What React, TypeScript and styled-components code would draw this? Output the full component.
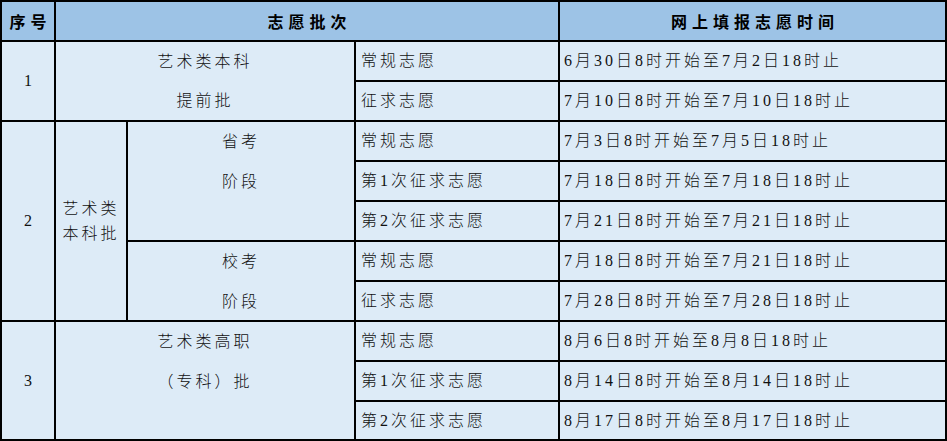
import React from "react";
import styled, { createGlobalStyle } from "styled-components";

const GlobalStyle = createGlobalStyle`
  html, body { margin: 0; padding: 0; background: #ffffff; }
  body { font-family: "Liberation Serif", "Noto Sans CJK SC", serif; }
`;

const Table = styled.div`
  display: grid;
  width: 947px;
  height: 441px;
  box-sizing: border-box;
  padding: 2px;
  gap: 2px;
  background: #000;
  grid-template-columns: 52px 70px 226px 202px 1fr;
  grid-template-rows: 38px repeat(9, 38px) 37px;
  font-family: "Liberation Serif", "Noto Sans CJK SC", serif;
  color: #111;
`;

type Align = "left" | "center";
type VAlign = "top" | "middle";

const Cell = styled.div<{
  $col: string;
  $row: string;
  $align?: Align;
  $valign?: VAlign;
  $lh?: number;
  $pad?: number;
}>`
  grid-column: ${(p) => p.$col};
  grid-row: ${(p) => p.$row};
  background: #ddebf7;
  display: flex;
  flex-direction: column;
  justify-content: ${(p) => (p.$valign === "top" ? "flex-start" : "center")};
  align-items: ${(p) => (p.$align === "left" ? "flex-start" : "center")};
  text-align: ${(p) => p.$align ?? "center"};
  padding: 0 ${(p) => p.$pad ?? 0}px;
  font-size: 16px;
  font-weight: 300;
  letter-spacing: 3px;
  line-height: ${(p) => p.$lh ?? 38}px;
  overflow: hidden;
  white-space: pre-line;
  box-sizing: border-box;
`;

const HeadCell = styled.div<{ $col: string }>`
  grid-column: ${(p) => p.$col};
  grid-row: 1;
  background: #9dc3e6;
  display: flex;
  align-items: center;
  justify-content: center;
  font-size: 16px;
  font-weight: 700;
  letter-spacing: 5px;
  padding-left: 5px;
  font-family: "Noto Sans CJK SC", sans-serif;
  color: #000;
`;

const NumCell = styled(Cell)`
  letter-spacing: 0;
`;

type Entry = { kind: string; time: string };

const rows: Entry[] = [
  { kind: "常规志愿", time: "6月30日8时开始至7月2日18时止" },
  { kind: "征求志愿", time: "7月10日8时开始至7月10日18时止" },
  { kind: "常规志愿", time: "7月3日8时开始至7月5日18时止" },
  { kind: "第1次征求志愿", time: "7月18日8时开始至7月18日18时止" },
  { kind: "第2次征求志愿", time: "7月21日8时开始至7月21日18时止" },
  { kind: "常规志愿", time: "7月18日8时开始至7月21日18时止" },
  { kind: "征求志愿", time: "7月28日8时开始至7月28日18时止" },
  { kind: "常规志愿", time: "8月6日8时开始至8月8日18时止" },
  { kind: "第1次征求志愿", time: "8月14日8时开始至8月14日18时止" },
  { kind: "第2次征求志愿", time: "8月17日8时开始至8月17日18时止" },
];

export default function App() {
  return (
    <>
      <GlobalStyle />
      <Table>
        <HeadCell $col="1">序号</HeadCell>
        <HeadCell $col="2 / 5">志愿批次</HeadCell>
        <HeadCell $col="5">网上填报志愿时间</HeadCell>

        <NumCell $col="1" $row="2 / 4">1</NumCell>
        <Cell $col="2 / 4" $row="2 / 4" $valign="top" $lh={39}>
          {"艺术类本科\n提前批"}
        </Cell>

        <NumCell $col="1" $row="4 / 9">2</NumCell>
        <Cell $col="2" $row="4 / 9" $lh={25} $pad={6}>
          艺术类本科批
        </Cell>
        <Cell $col="3" $row="4 / 7" $valign="top" $lh={40}>
          {"省考\n阶段"}
        </Cell>
        <Cell $col="3" $row="7 / 9" $valign="top" $lh={40}>
          {"校考\n阶段"}
        </Cell>

        <NumCell $col="1" $row="9 / 12">3</NumCell>
        <Cell $col="2 / 4" $row="9 / 12" $valign="top" $lh={40}>
          {"艺术类高职\n（专科）批"}
        </Cell>

        {rows.map((r, i) => (
          <React.Fragment key={i}>
            <Cell $col="4" $row={`${i + 2}`} $align="left" $pad={5}>
              {r.kind}
            </Cell>
            <Cell $col="5" $row={`${i + 2}`} $align="left" $pad={4}>
              {r.time}
            </Cell>
          </React.Fragment>
        ))}
      </Table>
    </>
  );
}
